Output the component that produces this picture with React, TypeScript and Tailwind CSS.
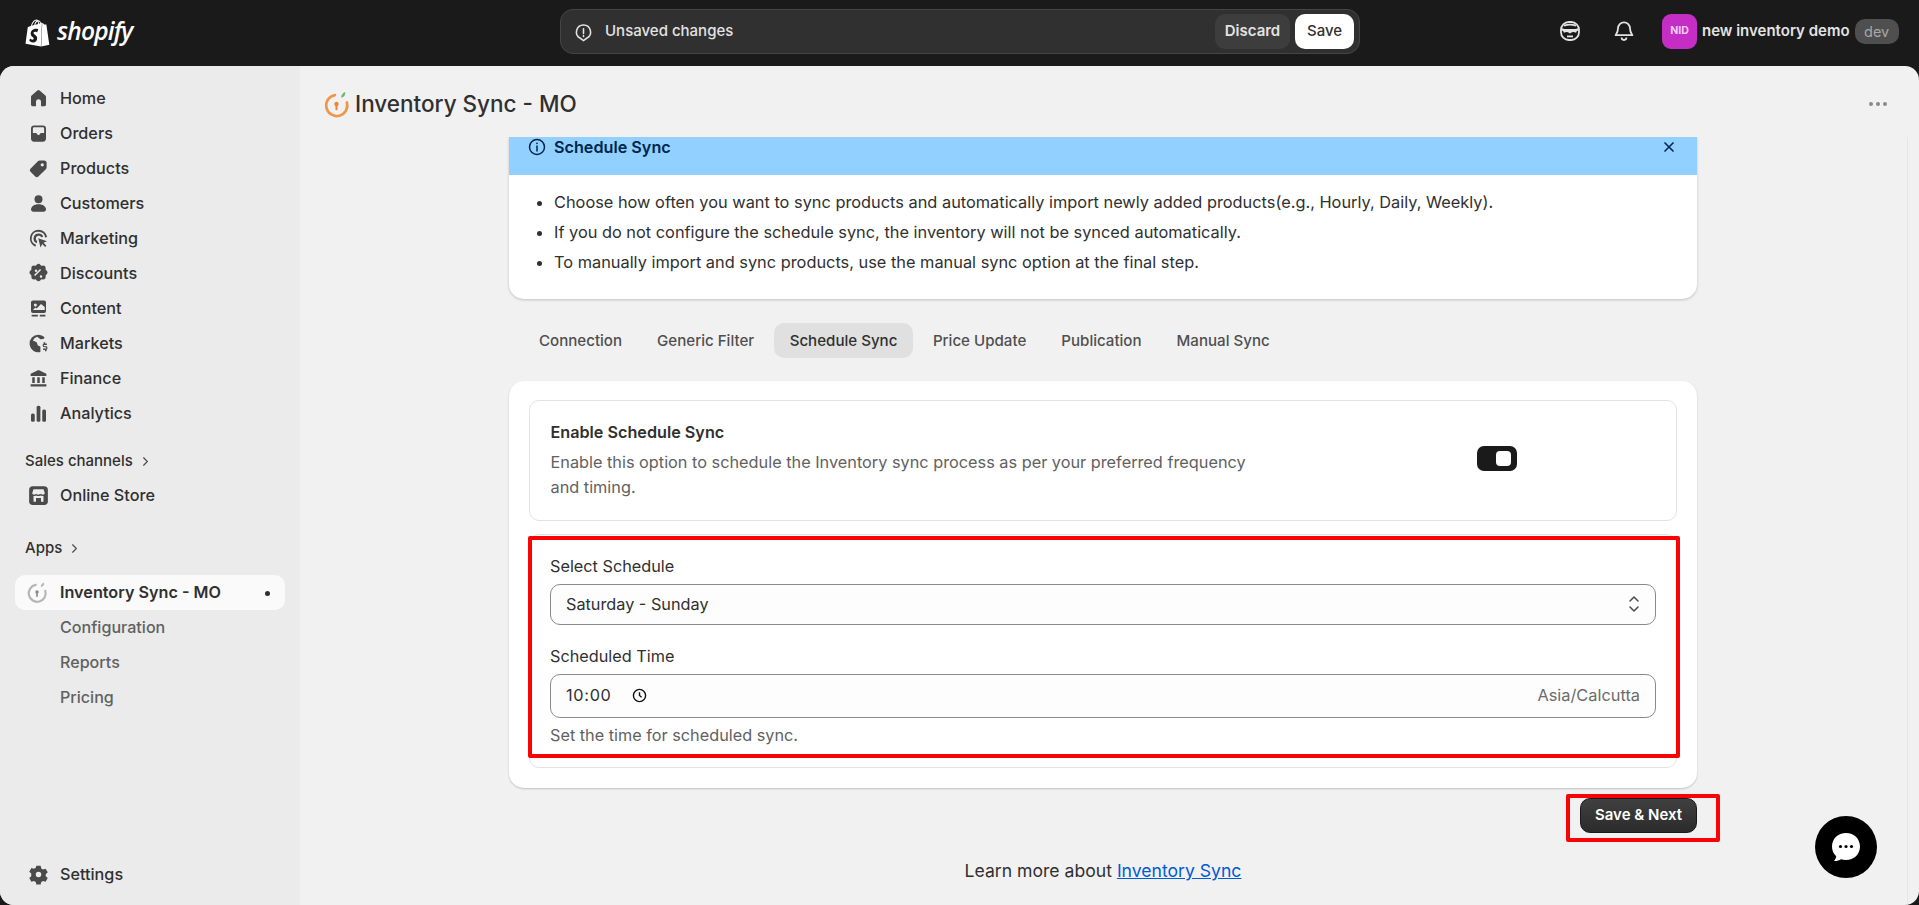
import React from "react";
import { SiShopify } from "react-icons/si";
import { ChevronRight, X } from "lucide-react";

const I = ({ children }: { children: React.ReactNode }) => (
  <svg viewBox="0 0 20 20" className="w-[25px] h-[25px] shrink-0" fill="#4a4a4a">{children}</svg>
);

const icons: Record<string, React.ReactNode> = {
  Home: <path d="M9.1 3.6a1.4 1.4 0 0 1 1.8 0l4.6 4a1.5 1.5 0 0 1 .5 1.1v6a1.5 1.5 0 0 1-1.5 1.5h-2a.5.5 0 0 1-.5-.5v-3.2a2 2 0 0 0-4 0v3.2a.5.5 0 0 1-.5.5h-2A1.5 1.5 0 0 1 4 14.700v-6a1.5 1.5 0 0 1 .5-1.1z" />,
  Orders: <path fillRule="evenodd" d="M6.500 3.500h7A2.500 2.500 0 0 1 16 6v8a2.500 2.500 0 0 1-2.500 2.500h-7A2.500 2.500 0 0 1 4 14V6a2.500 2.500 0 0 1 2.500-2.500M5.500 6v3.500h2.300c.5 0 .8.300 1 .7l.3.6c.1.2.300.3.500.3h.8c.2 0 .4-.1.500-.3l.3-.6c.2-.4.5-.7 1-.7h2.300V6a1 1 0 0 0-1-1h-7a1 1 0 0 0-1 1" />,
  Products: <path fillRule="evenodd" d="M11 3.500h3.500A2 2 0 0 1 16.500 5.500V9c0 .6-.2 1.100-.6 1.500l-6 5.900a1.800 1.800 0 0 1-2.500 0L3.600 12.600a1.800 1.800 0 0 1 0-2.500l5.900-6c.4-.4.9-.6 1.500-.6m2 2.200a1.300 1.300 0 1 0 0 2.600 1.300 1.300 0 0 0 0-2.600" />,
  Customers: <g><circle cx="10" cy="6.500" r="3.200" /><path d="M4 14.800c0-2.600 2.500-4.300 6-4.300s6 1.700 6 4.300c0 1-.8 1.700-1.800 1.700H5.800C4.800 16.500 4 15.800 4 14.800" /></g>,
  Marketing: <g><path d="M10 3a7 7 0 0 0-2.500 13.500l.5-1.500A5.400 5.400 0 1 1 15.300 9.200l1.600-.4A7 7 0 0 0 10 3" /><path d="M10 6a4 4 0 0 0-1.500 7.700l.5-1.600A2.300 2.300 0 1 1 12.200 9l1.600-.4A4 4 0 0 0 10 6" /><path d="M9.800 9.800l7 2.300-2.800 1.300 2.300 2.300-1 1-2.300-2.300-1.400 2.800z" /></g>,
  Discounts: <g><path fillRule="evenodd" d="M8.400 3.100a2.200 2.200 0 0 1 3.200 0l.7.7 1-.1a2.200 2.200 0 0 1 2.400 2.200v1l.7.700a2.200 2.200 0 0 1 0 3.200l-.7.7v1a2.200 2.200 0 0 1-2.400 2.200l-1-.1-.7.7a2.200 2.200 0 0 1-3.200 0l-.7-.7-1 .1a2.200 2.200 0 0 1-2.400-2.200v-1l-.7-.7a2.200 2.200 0 0 1 0-3.200l.7-.7v-1A2.200 2.200 0 0 1 6.700 3.700l1 .1zM7.300 12l4.800-4.800-.9-.9-4.800 4.800zM8 8.700a1 1 0 1 0 0-2 1 1 0 0 0 0 2m4 4.700a1 1 0 1 0 0-2 1 1 0 0 0 0 2" /></g>,
  Content: <g><path fillRule="evenodd" d="M5.500 3.500h9A1.500 1.500 0 0 1 16 5v7a1.500 1.500 0 0 1-1.500 1.500h-9A1.500 1.500 0 0 1 4 12V5a1.500 1.500 0 0 1 1.500-1.500m2 2.500a1.200 1.200 0 1 0 0 2.400 1.200 1.200 0 0 0 0-2.400m4.500.3L8.500 10l-1-.8-2 2h9.500V8.800z" /><path d="M4.500 15h5v1.300h-5zM11 15h4.500v1.300H11z" /></g>,
  Markets: <g><path d="M10 3a7 7 0 1 0 1.500 13.800v-4.500l-2-.8-1-2.500-3-1.500A5.600 5.600 0 0 1 9 4.600l2.500 2 2.500-.3L14.900 5A7 7 0 0 0 10 3" /><path d="M15.300 9v1h1.400v1.100h-2a.5.500 0 0 0 0 1h.900a1.600 1.600 0 0 1 .8 3v1h-1.200v-.9H13.700V14h2.100a.5.500 0 0 0 0-1h-1a1.600 1.600 0 0 1-.7-3V9z" /></g>,
  Finance: <g><path d="M10 3.200l6.300 3v1.800H3.700V6.200z" /><path d="M5 9h2v4.500H5zM9 9h2v4.500H9zM13 9h2v4.500h-2zM3.700 14.500h12.600v1.800H3.700z" /></g>,
  Analytics: <g><rect x="4" y="10" width="3" height="6.500" rx="1.200" /><rect x="8.500" y="3.800" width="3" height="12.700" rx="1.200" /><rect x="13" y="6.800" width="3" height="9.700" rx="1.200" /></g>,
  "Online Store": <g><path fillRule="evenodd" d="M5.500 2.500h9a3 3 0 0 1 3 3v9a3 3 0 0 1-3 3h-9a3 3 0 0 1-3-3v-9a3 3 0 0 1 3-3M6 5 5 8c0 .9.800 1.300 1.500 1.300.6 0 1.100-.3 1.500-.7.400.4 1.200.7 2 .7s1.600-.3 2-.7c.4.400.9.700 1.500.7.700 0 1.500-.4 1.500-1.300l-1-3zM6 10.400V15h2v-3h4v3h2v-4.600a3.800 3.800 0 0 1-2-.4 4.600 4.600 0 0 1-4 0 3.800 3.800 0 0 1-2 .4" /></g>,
  Settings: <path fillRule="evenodd" d="M8.300 3h3.400l.5 2.100 1.400.8 2.100-.6 1.700 2.900-1.600 1.500v1.600l1.600 1.500-1.700 2.900-2.100-.6-1.400.8-.5 2.100H8.300l-.5-2.100-1.400-.8-2.100.6-1.700-2.900 1.600-1.500V9.200L2.600 7.700l1.700-2.900 2.100.6 1.400-.8zM10 7.800a2.200 2.200 0 1 0 0 4.400 2.200 2.200 0 0 0 0-4.400" />,
};

const NavRow = ({ label }: { label: string }) => (
  <div className="flex h-[35px] items-center pl-[25.5px] gap-[9.500px] text-[16.2px] font-medium text-[#303030]">
    <I>{icons[label]}</I>
    <span>{label}</span>
  </div>
);

const SectionLabel = ({ label }: { label: string }) => (
  <div className="flex items-center gap-[5px] pl-[25px] h-[20px] text-[15px] font-medium text-[#303030]">
    <span>{label}</span>
    <ChevronRight className="w-[15px] h-[15px] text-[#4a4a4a]" strokeWidth={1.800} />
  </div>
);

const SubRow = ({ label }: { label: string }) => (
  <div className="flex h-[35px] items-center pl-[60px] text-[16.1px] font-medium text-[#616161]">{label}</div>
);

const AppMark = ({ ring, leaf, dot, small }: { ring: string; leaf: string; dot: string; small?: boolean }) => (
  <svg viewBox="0 0 26 30" className={small ? "w-[22px] h-[25px] shrink-0" : "w-[27px] h-[31px] shrink-0"}>
    <path d="M11.500 5.900A10.200 10.200 0 1 0 23 13" fill="none" stroke={ring} strokeWidth="2.600" strokeLinecap="round" />
    <circle cx="13" cy="14.500" r="2.100" fill={dot} />
    <rect x="12" y="15.500" width="2" height="5" rx="1" fill={dot} />
    <path d="M17.500 8.500c0-2.500 1.500-4.800 4-5.500.4 2.800-1 5-4 5.500" fill={leaf} />
  </svg>
);

const tabs = ["Connection", "Generic Filter", "Schedule Sync", "Price Update", "Publication", "Manual Sync"];

export default function App() {
  return (
    <div className="w-[1919px] h-[905px] overflow-hidden bg-[#1a1a1a] font-['Inter',sans-serif] flex flex-col">
      {/* top bar */}
      <header className="h-[66px] shrink-0 flex items-center relative">
        <div className="w-[560px] shrink-0 pl-[24px] flex items-center gap-[6px]">
          <SiShopify className="w-[27px] h-[30px] text-white" />
          <span className="font-['Open_Sans',sans-serif] italic font-semibold text-[24.500px] tracking-[-0.8px] leading-none text-white pb-[4px]">shopify</span>
        </div>
        <div className="w-[800px] h-[45px] mt-[-3px] rounded-[13px] bg-[#303030] border border-[#454545] flex items-center pl-[12px] pr-[5px]">
          <svg viewBox="0 0 20 20" className="w-[21px] h-[21px] mt-[1px]" fill="none" stroke="#e3e3e3" strokeWidth="1.500">
            <path d="M10 2.800a6.700 6.700 0 0 0-3 12.700l3 2.200 3-2.200a6.700 6.700 0 0 0-3-12.700z" />
            <path d="M10 6.500v4.500M10 13v.8" strokeLinecap="round" />
          </svg>
          <span className="ml-[11px] text-[15px] font-medium text-[#e3e3e3]">Unsaved changes</span>
          <button className="ml-auto w-[75px] h-[35px] rounded-[10px] bg-[#3d3d3d] text-[15px] font-semibold text-[#e3e3e3]">Discard</button>
          <button className="ml-[5px] w-[59px] h-[35px] rounded-[10px] bg-white text-[15px] font-medium text-[#303030]">Save</button>
        </div>
        <div className="ml-[198px] flex items-center mt-[-4px]">
          <svg viewBox="0 0 20 20" className="w-[24px] h-[24px]" fill="none" stroke="#e3e3e3" strokeWidth="1.500">
            <rect x="2.500" y="2.500" width="15" height="15" rx="6.500" />
            <path d="M3 8.500c2 1.200 12 1.200 14 0M4.500 10.500c2-1 4.500-.5 5.500.3 1-.8 3.500-1.300 5.500-.3" strokeWidth="2" />
            <path d="M7.500 14.500h5" />
            <path d="M5 5.500c3-1 7-1 10 0" />
          </svg>
          <svg viewBox="0 0 20 20" className="ml-[30px] w-[24px] h-[24px]" fill="none" stroke="#e3e3e3" strokeWidth="1.500">
            <path d="M10 2.800a5 5 0 0 0-5 5c0 3.200-1.100 4.300-2 5.700h14c-.9-1.400-2-2.500-2-5.700a5 5 0 0 0-5-5z" strokeLinejoin="round" />
            <path d="M8 15.500a2 2 0 0 0 4 0" />
          </svg>
          <div className="ml-[26px] w-[35px] h-[35px] rounded-[9px] bg-[#c42ec4] flex items-center justify-center text-[10.500px] font-bold text-[#fbd0fb]">NID</div>
          <span className="ml-[5px] text-[15px] font-semibold text-[#e3e3e3] whitespace-nowrap">new inventory demo</span>
          <span className="ml-[5px] h-[25px] px-[9.500px] rounded-[10px] bg-[#4f4f4f] text-[14.500px] leading-[25px] text-[#a8a8a8]">dev</span>
        </div>
      </header>

      {/* body */}
      <div className="flex-1 min-h-0 flex rounded-[14px] overflow-hidden bg-[#f1f1f1]">
        <aside className="w-[300px] shrink-0 bg-[#ebebeb] flex flex-col pt-[15px] pb-[13px]">
          {["Home", "Orders", "Products", "Customers", "Marketing", "Discounts", "Content", "Markets", "Finance", "Analytics"].map((l) => (
            <NavRow key={l} label={l} />
          ))}
          <div className="mt-[20px]"><SectionLabel label="Sales channels" /></div>
          <div className="mt-[7px]"><NavRow label="Online Store" /></div>
          <div className="mt-[25px]"><SectionLabel label="Apps" /></div>
          <div className="mt-[17px] mx-[15px] h-[35px] rounded-[10px] bg-[#fafafa] flex items-center pl-[11px] text-[16.2px] font-semibold text-[#303030]">
            <AppMark ring="#b5b5b5" leaf="#b5b5b5" dot="#8a8a8a" small />
            <span className="ml-[12px]">Inventory Sync - MO</span>
            <span className="ml-auto mr-[15px] mt-[2px] w-[5px] h-[5px] rounded-full bg-[#303030]" />
          </div>
          {["Configuration", "Reports", "Pricing"].map((l) => (
            <SubRow key={l} label={l} />
          ))}
          <div className="mt-auto"><NavRow label="Settings" /></div>
        </aside>

        <main className="flex-1 min-w-0 flex flex-col">
          <div className="h-[71px] shrink-0 flex items-center pl-[23px] pr-[31px] pt-[5px]">
            <AppMark ring="#f0954a" leaf="#6fb86a" dot="#e8873a" />
            <h1 className="ml-[5px] text-[22.500px] font-medium text-[#303030]">Inventory Sync - MO</h1>
            <svg viewBox="0 0 20 6" className="ml-auto w-[20px] h-[6px]" fill="#8a8a8a">
              <circle cx="3" cy="3" r="2" /><circle cx="10" cy="3" r="2" /><circle cx="17" cy="3" r="2" />
            </svg>
          </div>

          <div className="flex-1 min-h-0 overflow-hidden pl-[209px] relative">
            <div className="w-[1188px]">
              {/* info banner */}
              <section className="h-[162px] rounded-b-[15px] bg-white shadow-[0_1px_3px_rgba(0,0,0,0.2)] overflow-hidden">
                <div className="h-[38px] bg-[#91d0ff] flex items-start pl-[18px] pr-[20px]">
                  <svg viewBox="0 0 20 20" className="w-[20px] h-[20px]" fill="none" stroke="#00264d" strokeWidth="1.500">
                    <circle cx="10" cy="10" r="7.500" />
                    <path d="M10 9v5" strokeLinecap="round" />
                    <circle cx="10" cy="6.300" r=".9" fill="#00264d" stroke="none" />
                  </svg>
                  <span className="ml-[7px] text-[16.2px] leading-[20px] font-semibold text-[#00264d]">Schedule Sync</span>
                  <X className="ml-auto mt-[2px] w-[16px] h-[16px] text-[#00264d]" strokeWidth={2.500} />
                </div>
                <ul className="pt-[12px] pl-[45px] list-disc text-[16.35px] leading-[30px] text-[#303030]">
                  <li>Choose how often you want to sync products and automatically import newly added products(e.g., Hourly, Daily, Weekly).</li>
                  <li>If you do not configure the schedule sync, the inventory will not be synced automatically.</li>
                  <li>To manually import and sync products, use the manual sync option at the final step.</li>
                </ul>
              </section>

              {/* tabs */}
              <nav className="mt-[24px] pl-[15px] flex gap-[5px]">
                {tabs.map((t) => (
                  <div
                    key={t}
                    className={t === "Schedule Sync"
                      ? "h-[35px] pt-[1px] px-[15.500px] rounded-[10px] bg-[#e0e0e0] flex items-center text-[15.1px] font-medium text-[#303030] whitespace-nowrap"
                      : "h-[35px] pt-[1px] px-[15px] rounded-[10px] flex items-center text-[15.1px] font-medium text-[#4f4f4f] whitespace-nowrap"}
                  >
                    {t}
                  </div>
                ))}
              </nav>

              {/* settings card */}
              <section className="mt-[23px] h-[407px] rounded-[15px] bg-white shadow-[0_1px_2px_rgba(0,0,0,0.2)] pt-[19px] px-[20px]">
                <div className="h-[121px] rounded-[10px] border border-[#e3e3e3] flex pl-[20.5px] pt-[18.5px]">
                  <div className="w-[705px]">
                    <div className="text-[16.2px] leading-[25px] font-semibold text-[#303030]">Enable Schedule Sync</div>
                    <p className="text-[16.3px] leading-[25px] text-[#616161] mt-[5px]">Enable this option to schedule the Inventory sync process as per your preferred frequency and timing.</p>
                  </div>
                  <div className="ml-[221.5px] mt-[26.5px] w-[40px] h-[25px] rounded-[7px] bg-[#1a1a1a] flex items-center justify-end pr-[6px]">
                    <div className="w-[15px] h-[15px] rounded-[4px] bg-white" />
                  </div>
                </div>

                <div className="relative mt-[13px] h-[234px] rounded-[10px] border border-[#e3e3e3] pl-[20px] pr-[20px] pt-[20.5px]">
                  <div className="text-[16.25px] leading-[20px] text-[#303030]">Select Schedule</div>
                  <div className="mt-[8px] h-[41px] rounded-[10px] border border-[#8a8a8a] bg-[#fdfdfd] flex items-center pl-[15px] pr-[15px] text-[16.25px] text-[#303030]">
                    <span>Saturday - Sunday</span>
                    <svg viewBox="0 0 12 18" className="ml-auto w-[12px] h-[18px]" fill="none" stroke="#4a4a4a" strokeWidth="1.500" strokeLinecap="round" strokeLinejoin="round">
                      <path d="M2 6l4-4 4 4M2 12l4 4 4-4" />
                    </svg>
                  </div>
                  <div className="mt-[21px] text-[16.25px] leading-[20px] text-[#303030]">Scheduled Time</div>
                  <div className="mt-[8px] h-[44px] rounded-[10px] border border-[#8a8a8a] bg-[#fdfdfd] flex items-center pl-[15px] pr-[15px] text-[16.25px] text-[#303030]">
                    <span className="tracking-[0.7px]">10:00</span>
                    <svg viewBox="0 0 16 16" className="ml-[20px] w-[15px] h-[15px]" fill="none" stroke="#111" strokeWidth="1.500">
                      <circle cx="8" cy="8" r="6.500" /><path d="M8 4.500V8l2.300 1.800" />
                    </svg>
                    <span className="ml-auto text-[16.35px] text-[#6b6b6b]">Asia/Calcutta</span>
                  </div>
                  <div className="mt-[7px] text-[16.25px] leading-[20px] text-[#616161]">Set the time for scheduled sync.</div>
                  <div className="absolute left-[-2px] top-[1px] w-[1152px] h-[222px] border-[4px] border-[#f80404] rounded-[2px] pointer-events-none" />
                </div>
              </section>

              <div className="relative mt-[10px] flex justify-end">
                <button className="w-[117px] h-[35px] rounded-[10px] border border-[#1a1a1a] bg-[linear-gradient(#404040,#2b2b2b)] text-[15px] font-semibold text-white">Save &amp; Next</button>
                <div className="absolute left-[1057px] top-[-4px] w-[154px] h-[48px] border-[4px] border-[#f80404] rounded-[2px] pointer-events-none" />
              </div>

              <p className="mt-[25px] text-center text-[17.600px] leading-[26px] text-[#303030]">
                Learn more about <span className="text-[#005bd3] underline">Inventory Sync</span>
              </p>
            </div>

            <div className="absolute right-[42px] top-[679px] w-[62px] h-[62px] rounded-full bg-black flex items-center justify-center">
              <svg viewBox="0 0 32 32" className="w-[32px] h-[32px]">
                <path d="M16 2c8 0 14 5.800 14 13.500S24 29 16 29c-1.800 0-3.500-.3-5-.8-1.800 1.100-4.500 2-7 1.800 1.200-1.200 2-3 2.200-4.800A13 13 0 0 1 2 15.500C2 7.800 8 2 16 2z" fill="#fff" />
                <circle cx="10.500" cy="15.500" r="1.600" fill="#000" /><circle cx="16" cy="15.500" r="1.600" fill="#000" /><circle cx="21.500" cy="15.500" r="1.600" fill="#000" />
              </svg>
            </div>
            <div className="absolute right-[11px] top-0 bottom-0 w-px bg-[#e6e6e6]" />
          </div>
        </main>
      </div>
    </div>
  );
}
